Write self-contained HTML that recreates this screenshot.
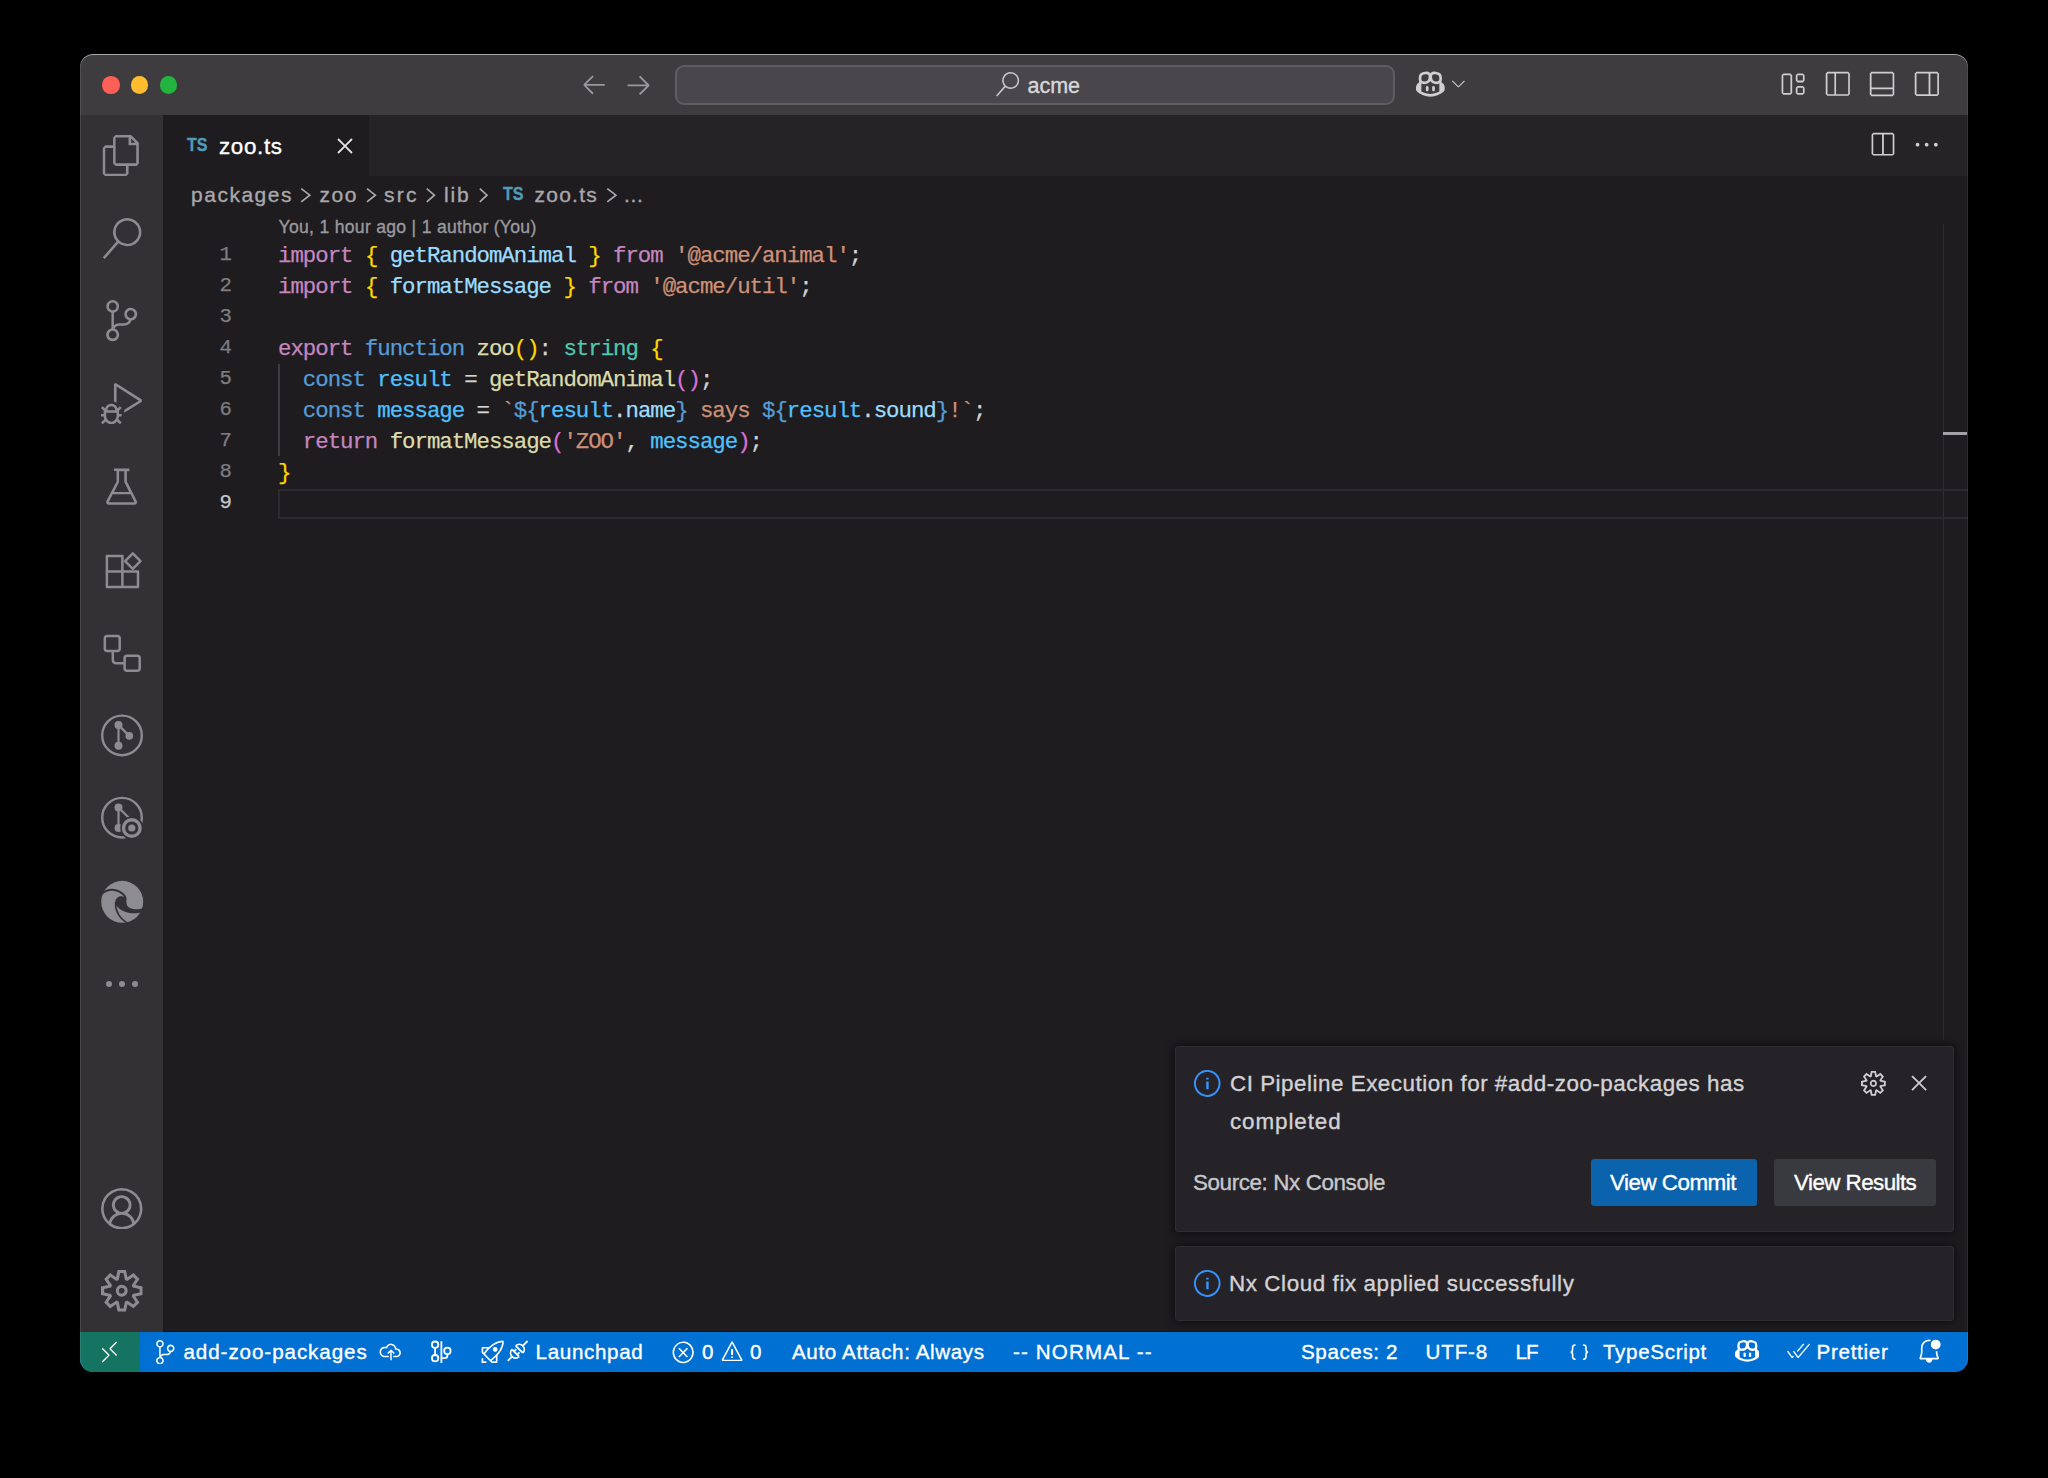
<!DOCTYPE html>
<html><head><meta charset="utf-8">
<style>
*{margin:0;padding:0;box-sizing:border-box}
html,body{width:2048px;height:1478px;background:#000;overflow:hidden}
.a{position:absolute;white-space:pre}
.S{font-family:"Liberation Sans",sans-serif;font-kerning:normal;-webkit-text-stroke:0.35px currentColor}
.M{font-family:"Liberation Mono",monospace;-webkit-text-stroke:0.25px currentColor}
#win{position:absolute;left:0;top:0;width:2048px;height:1478px;clip-path:inset(54px 80px 106px 80px round 13px)}
#frame{position:absolute;left:80px;top:54px;width:1888px;height:1318px;border-radius:13px;box-shadow:inset 0 1px 0 rgba(255,255,255,.55),inset 1px 0 0 rgba(255,255,255,.1),inset -1px 0 0 rgba(255,255,255,.08)}
</style></head><body>
<div id="win">
<div class="a" style="left:80px;top:53px;width:1888px;height:62px;background:#3e3c3f;"></div>
<div class="a" style="left:80px;top:115px;width:83px;height:1217px;background:#333134;"></div>
<div class="a" style="left:163px;top:115px;width:1805px;height:61px;background:#252326;"></div>
<div class="a" style="left:163px;top:115px;width:206px;height:61px;background:#1e1c1f;"></div>
<div class="a" style="left:163px;top:176px;width:1805px;height:1156px;background:#1e1c1f;"></div>
<div class="a" style="left:163px;top:1330.5px;width:1805px;height:1.5px;background:#161518;"></div>
<div class="a" style="left:80px;top:1332px;width:1888px;height:40px;background:#0070d3;"></div>
<div class="a" style="left:80px;top:1332px;width:60px;height:40px;background:#157461;"></div>
<div class="a" style="left:102.3px;top:76.3px;width:17.4px;height:17.4px;border-radius:50%;background:#fe5f57"></div>
<div class="a" style="left:130.8px;top:76.3px;width:17.4px;height:17.4px;border-radius:50%;background:#febc2e"></div>
<div class="a" style="left:159.6px;top:76.3px;width:17.4px;height:17.4px;border-radius:50%;background:#23b33f"></div>
<svg class="a" style="left:580.12px;top:70.47px" width="28.27" height="28.27" viewBox="0 0 16 16" preserveAspectRatio="none"><path d="M6.99 3.09 2.03 8.11V8.8L6.99 13.81L7.73 13.07L3.57 8.96H14.03V7.95H3.57L7.73 3.79Z" fill="#9a999d"/></svg>
<svg class="a" style="left:624.34px;top:69.97px" width="28.93" height="28.93" viewBox="0 0 16 16" preserveAspectRatio="none"><path d="M9.01 13.87 14.03 8.91V8.16L9.01 3.2L8.27 3.89L12.43 8.05H2.03V9.01H12.43L8.27 13.17Z" fill="#9a999d"/></svg>
<div class="a" style="left:675px;top:64.5px;width:720px;height:40.7px;border-radius:9px;border:2px solid #5f5d61;background:#49474b"></div>
<svg class="a" style="left:994.83px;top:72.40px" width="24.68" height="24.68" viewBox="0 0 16 16" preserveAspectRatio="none"><path d="M10.19 0Q8.53 0 7.17 0.88Q5.81 1.76 5.15 3.25Q4.48 4.75 4.72 6.35Q4.96 7.95 6.03 9.12L0.69 15.25L1.44 15.89L6.77 9.81Q8.21 10.93 10 10.99Q11.79 11.04 13.28 10.03Q14.77 9.01 15.36 7.31Q15.95 5.6 15.41 3.87Q14.88 2.13 13.41 1.07Q11.95 0 10.19 0ZM10.19 9.97Q8.96 9.97 7.92 9.39Q6.88 8.8 6.27 7.76Q5.65 6.72 5.65 5.49Q5.65 4.27 6.27 3.23Q6.88 2.19 7.92 1.6Q8.96 1.01 10.19 1.01Q11.41 1.01 12.43 1.6Q13.44 2.19 14.05 3.23Q14.67 4.27 14.67 5.49Q14.67 6.72 14.05 7.76Q13.44 8.8 12.43 9.41Q11.41 10.03 10.19 10.03Z" fill="#c8c7ca"/></svg>
<div id="t0" class="a S" style="left:1027.50px;top:75.82px;font-size:21.5px;line-height:21.5px;color:#d8d7da;font-weight:400;letter-spacing:0.000px;">acme</div>
<svg class="a" style="left:1416.30px;top:68.46px" width="28.70" height="28.70" viewBox="0 0 16 16" preserveAspectRatio="none"><path d="M6.24 9.97Q6.56 9.97 6.77 10.21Q6.99 10.45 6.99 10.77V12.27Q6.99 12.59 6.77 12.8Q6.56 13.01 6.24 13.01Q5.92 13.01 5.71 12.8Q5.49 12.59 5.49 12.27V10.77Q5.49 10.45 5.71 10.21Q5.92 9.97 6.24 9.97ZM10.51 10.77Q10.51 10.45 10.29 10.21Q10.08 9.97 9.76 9.97Q9.44 9.97 9.23 10.21Q9.01 10.45 9.01 10.77V12.27Q9.01 12.59 9.23 12.8Q9.44 13.01 9.76 13.01Q10.08 13.01 10.29 12.8Q10.51 12.59 10.51 12.27ZM7.84 2.77Q7.95 2.83 8 2.93L8.16 2.77Q9.07 1.76 11.09 2.03Q12.96 2.24 13.81 3.25Q14.51 4.16 14.51 5.76Q14.51 6.77 14.24 7.41L14.4 8.27H14.45Q15.2 8.64 15.6 9.31Q16 9.97 16 10.72V12Q16 12.27 15.84 12.59Q15.73 12.75 15.55 12.99Q15.36 13.23 14.99 13.49L14.4 13.92Q14.08 14.19 13.71 14.4Q13.07 14.77 12.37 15.04Q10.19 16 8 16Q5.81 16 3.63 15.04Q2.93 14.77 2.29 14.4Q1.92 14.19 1.6 13.92L1.01 13.49Q0.64 13.23 0.45 12.99Q0.27 12.75 0.16 12.59Q0 12.27 0 12V10.72Q0 9.97 0.4 9.31Q0.8 8.64 1.55 8.27H1.6L1.76 7.41Q1.49 6.77 1.49 5.76Q1.49 4.16 2.19 3.25Q3.04 2.24 4.91 2.03Q6.93 1.76 7.84 2.77ZM3.04 8.69 2.99 8.8V13.07L3.04 13.12Q3.57 13.44 4.21 13.71Q6.13 14.51 8 14.51Q9.87 14.51 11.79 13.71Q12.43 13.44 12.96 13.12L13.01 13.07V8.8L12.96 8.69Q12.32 9.01 11.25 9.01Q9.49 9.01 8.53 8Q8.21 7.68 8 7.25Q7.79 7.68 7.47 8Q6.51 9.01 4.75 9.01Q3.68 9.01 3.04 8.69ZM6.77 3.79Q6.35 3.36 5.07 3.49Q3.79 3.63 3.39 4.13Q2.99 4.64 2.99 5.71Q2.99 6.77 3.31 7.15Q3.63 7.52 4.75 7.52Q5.87 7.52 6.37 6.99Q6.88 6.45 6.99 5.39Q7.15 4.21 6.77 3.79ZM9.23 3.79Q8.85 4.21 9.01 5.39Q9.12 6.45 9.63 6.99Q10.13 7.52 11.25 7.52Q12.37 7.52 12.69 7.15Q13.01 6.77 13.01 5.71Q13.01 4.64 12.61 4.13Q12.21 3.63 10.93 3.49Q9.65 3.36 9.23 3.79Z" fill="#cfcfd2"/></svg>
<svg class="a" style="left:1448.11px;top:73.36px" width="20.86" height="20.86" viewBox="0 0 16 16" preserveAspectRatio="none"><path d="M8 10.08 12.32 5.71 12.96 6.35 8.27 10.99H7.68L2.99 6.35L3.63 5.71Z" fill="#cfcfd2"/></svg>
<svg class="a" style="left:1778.40px;top:70.30px" width="28.40" height="28.40" viewBox="0 0 16 16" preserveAspectRatio="none"><path d="M2.99 1.97 2.03 2.99V13.01L2.99 13.97H6.99L8 13.01V2.99L6.99 1.97ZM2.99 13.01V2.99H6.99V13.01ZM10.03 2.99 10.99 1.97H14.03L14.99 2.99V5.97L14.03 6.99H10.99L10.03 5.97ZM10.99 2.99V5.97H14.03V2.99ZM10.03 9.97 10.99 9.01H14.03L14.99 9.97V13.01L14.03 13.97H10.99L10.03 13.01ZM10.99 9.97V13.01H14.03V9.97Z" fill="#cfcfd2"/></svg>
<svg class="a" style="left:1823.75px;top:70.45px" width="27.60" height="27.60" viewBox="0 0 16 16" preserveAspectRatio="none"><path d="M2.03 1.01 1.01 2.03V14.03L2.03 14.99H14.03L14.99 14.03V2.03L14.03 1.01ZM2.03 14.03V2.03H6.03V14.03ZM6.99 14.03V2.03H14.03V14.03Z" fill="#cfcfd2"/></svg>
<svg class="a" style="left:1868.22px;top:70.42px" width="28.05" height="28.05" viewBox="0 0 16 16" preserveAspectRatio="none"><path d="M2.03 1.01 1.01 2.03V14.03L2.03 14.99H14.03L14.99 14.03V2.03L14.03 1.01ZM2.03 10.03V2.03H14.03V10.03ZM2.03 10.99H14.03V14.03H2.03Z" fill="#cfcfd2"/></svg>
<svg class="a" style="left:1913.45px;top:70.45px" width="27.71" height="27.71" viewBox="0 0 16 16" preserveAspectRatio="none"><path d="M2.03 1.01 1.01 2.03V14.03L2.03 14.99H14.03L14.99 14.03V2.03L14.03 1.01ZM2.03 14.03V2.03H9.01V14.03ZM10.03 14.03V2.03H14.03V14.03Z" fill="#cfcfd2"/></svg>
<svg class="a" style="left:101.4px;top:135.20px" width="41.3" height="41.3" viewBox="0 0 16 16"><path d="M11.68 0H5.65L4.69 1.01V4H1.65L0.69 5.01V15.04L1.65 16H9.71L10.67 15.04V12H13.81L14.67 11.04V2.99ZM11.68 1.39 13.28 2.99H11.68ZM9.65 14.99H1.65V5.01H4.69V11.04L5.65 12H9.65ZM13.65 10.99H5.65V1.01H10.67V4H13.65Z" fill="#8d8c90"/></svg>
<svg class="a" style="left:101.4px;top:217.80px" width="41.3" height="41.3" viewBox="0 0 16 16"><path d="M10.19 0Q8.53 0 7.17 0.88Q5.81 1.76 5.15 3.25Q4.48 4.75 4.72 6.35Q4.96 7.95 6.03 9.12L0.69 15.25L1.44 15.89L6.77 9.81Q8.21 10.93 10 10.99Q11.79 11.04 13.28 10.03Q14.77 9.01 15.36 7.31Q15.95 5.6 15.41 3.87Q14.88 2.13 13.41 1.07Q11.95 0 10.19 0ZM10.19 9.97Q8.96 9.97 7.92 9.39Q6.88 8.8 6.27 7.76Q5.65 6.72 5.65 5.49Q5.65 4.27 6.27 3.23Q6.88 2.19 7.92 1.6Q8.96 1.01 10.19 1.01Q11.41 1.01 12.43 1.6Q13.44 2.19 14.05 3.23Q14.67 4.27 14.67 5.49Q14.67 6.72 14.05 7.76Q13.44 8.8 12.43 9.41Q11.41 10.03 10.19 10.03Z" fill="#8d8c90"/></svg>
<svg class="a" style="left:101.4px;top:300.40px" width="41.3" height="41.3" viewBox="0 0 16 16"><path d="M14.03 5.49Q14.03 4.8 13.65 4.19Q13.28 3.57 12.64 3.25Q12 2.93 11.31 2.99Q10.61 3.04 10.03 3.47Q9.44 3.89 9.2 4.56Q8.96 5.23 9.07 5.92Q9.17 6.61 9.65 7.12Q10.13 7.63 10.83 7.84Q10.56 8.37 10.08 8.67Q9.6 8.96 9.01 8.96H7.04Q5.87 8.96 5.01 9.76V4.91Q5.97 4.75 6.53 3.97Q7.09 3.2 7.01 2.24Q6.93 1.28 6.21 0.64Q5.49 0 4.53 0Q3.57 0 2.85 0.64Q2.13 1.28 2.05 2.24Q1.97 3.2 2.53 3.97Q3.09 4.75 4.05 4.91V10.99Q3.09 11.2 2.51 11.95Q1.92 12.69 2 13.65Q2.08 14.61 2.75 15.28Q3.41 15.95 4.37 16Q5.33 16.05 6.08 15.47Q6.83 14.88 6.99 13.92Q7.15 12.96 6.67 12.16Q6.19 11.36 5.23 11.09Q5.49 10.56 5.97 10.27Q6.45 9.97 7.04 9.97H9.01Q9.97 9.97 10.75 9.41Q11.52 8.85 11.84 7.95Q12.75 7.84 13.39 7.12Q14.03 6.4 14.03 5.49ZM3.04 2.51Q3.04 1.87 3.47 1.44Q3.89 1.01 4.53 1.01Q5.17 1.01 5.6 1.44Q6.03 1.87 6.03 2.48Q6.03 3.09 5.6 3.55Q5.17 4 4.53 4Q3.89 4 3.47 3.55Q3.04 3.09 3.04 2.51ZM6.03 13.44Q6.03 14.08 5.6 14.51Q5.17 14.93 4.53 14.93Q3.89 14.93 3.47 14.51Q3.04 14.08 3.04 13.47Q3.04 12.85 3.47 12.4Q3.89 11.95 4.53 11.95Q5.17 11.95 5.6 12.4Q6.03 12.85 6.03 13.44ZM11.52 6.99Q10.88 6.99 10.45 6.53Q10.03 6.08 10.03 5.47Q10.03 4.85 10.45 4.43Q10.88 4 11.49 4Q12.11 4 12.56 4.43Q13.01 4.85 13.01 5.47Q13.01 6.08 12.56 6.53Q12.11 6.99 11.52 6.99Z" fill="#8d8c90"/></svg>
<svg class="a" style="left:101.4px;top:383.00px" width="41.3" height="41.3" viewBox="0 0 16 16"><path d="M7.31 9.01 6.4 9.87Q6.19 9.07 5.52 8.53Q4.85 8 4 8Q3.15 8 2.48 8.53Q1.81 9.07 1.6 9.87L0.69 9.01L0 9.71L1.17 10.83L1.01 10.99V12H0V13.01H1.01V13.07Q1.07 13.55 1.28 14.03L0 15.31L0.69 16L1.81 14.88Q2.19 15.41 2.77 15.71Q3.36 16 4 16Q4.64 16 5.23 15.71Q5.81 15.41 6.19 14.88L7.31 16L8 15.31L6.72 13.97Q6.93 13.55 6.99 13.01V12.96H8V12H6.99V10.99L6.88 10.83L8 9.71ZM4 9.01Q4.64 9.01 5.07 9.44Q5.49 9.87 5.49 10.51H2.51Q2.51 9.87 2.93 9.44Q3.36 9.01 4 9.01ZM6.03 13.01Q5.92 13.81 5.36 14.37Q4.8 14.93 4 14.99Q3.2 14.93 2.64 14.37Q2.08 13.81 2.03 13.01V11.52H6.03ZM15.84 6.4V7.25L9.01 11.57V10.4L14.67 6.83L6.03 1.33V7.63Q5.55 7.31 5.01 7.15V0.43L5.76 0Z" fill="#8d8c90"/></svg>
<svg class="a" style="left:101.4px;top:465.60px" width="41.3" height="41.3" viewBox="0 0 16 16"><path d="M13.87 13.55 10.03 6.03V2.03H10.99V1.01H5.01V1.97H6.03V5.97L2.08 13.55Q1.87 14.08 2.16 14.53Q2.45 14.99 2.99 14.99H13.01Q13.55 14.99 13.84 14.53Q14.13 14.08 13.87 13.55ZM6.88 6.4 6.99 6.19V2.03H9.01V6.24L10.93 10.03H5.07ZM2.99 14.03 4.53 10.99H11.47L13.01 14.03Z" fill="#8d8c90"/></svg>
<svg class="a" style="left:98px;top:546px" width="50" height="50" viewBox="98 546 50 50"><g fill="none" stroke="#8d8c90" stroke-width="2.5" stroke-linejoin="round"><path d="M106.9 555.9H122.4V571.5H138V587H106.9Z"/><path d="M106.9 571.5H122.4V587"/><path d="M132.8 553.4L140.5 561.1L132.8 568.8L125.1 561.1Z"/></g></svg>
<svg class="a" style="left:98px;top:628px" width="50" height="50" viewBox="98 628 50 50"><g fill="none" stroke="#8d8c90" stroke-width="2.5" stroke-linejoin="round"><rect x="104.8" y="636.1" width="14.9" height="14.9" rx="2.5"/><rect x="124.6" y="655.7" width="15.1" height="15.1" rx="2.5"/><path d="M112.8 651V659.5Q112.8 663.3 116.6 663.3H124.6"/></g></svg>
<svg class="a" style="left:98px;top:710px" width="50" height="50" viewBox="98 710 50 50"><circle cx="122" cy="735.4" r="19.8" fill="none" stroke="#8d8c90" stroke-width="2.4"/><path d="M118.5 725.1V745.7M118.5 725.1L129.3 735.9" stroke="#8d8c90" stroke-width="2.2"/><circle cx="118.5" cy="725.1" r="4" fill="#8d8c90"/><circle cx="118.5" cy="745.7" r="4" fill="#8d8c90"/><circle cx="129.3" cy="735.9" r="3.8" fill="#8d8c90"/></svg>
<svg class="a" style="left:98px;top:792px" width="52" height="52" viewBox="98 792 52 52"><circle cx="122" cy="817.7" r="19.8" fill="none" stroke="#8d8c90" stroke-width="2.4"/><path d="M118.5 807.5V828M118.5 807.5L129.3 818.3" stroke="#8d8c90" stroke-width="2.2"/><circle cx="118.5" cy="807.5" r="4" fill="#8d8c90"/><circle cx="118.5" cy="828" r="4" fill="#8d8c90"/><circle cx="131.8" cy="828" r="11.5" fill="#333134"/><circle cx="131.8" cy="828" r="8.3" fill="none" stroke="#8d8c90" stroke-width="3.4"/><circle cx="131.8" cy="828" r="3.6" fill="#8d8c90"/></svg>
<svg class="a" style="left:98px;top:876px" width="50" height="52" viewBox="98 876 50 52"><circle cx="122.2" cy="901.8" r="21" fill="#8d8c90"/><path d="M100.6 895.2C105 889.5 113 888.3 119 891.3C123.5 893.5 125.8 897 125.8 900" fill="none" stroke="#333134" stroke-width="1.9"/><path d="M115.3 901.5C115.8 897 120.5 895 124.2 896.8C126.3 898 126.5 901.5 126.5 903C126.5 907.5 132 909.5 137.5 909.3C139.5 909.2 141.5 908.8 143.3 908.2L142.3 912C138 913.5 131 914 125.5 912C119.5 909.8 115.3 906 115.3 901.5Z" fill="#333134"/><path d="M115.6 902C115 911 120 919.5 128.5 923.5" fill="none" stroke="#333134" stroke-width="1.7"/></svg>
<div class="a" style="left:105.8px;top:981.3px;width:6.2px;height:6.2px;border-radius:50%;background:#8d8c90"></div>
<div class="a" style="left:118.7px;top:981.3px;width:6.2px;height:6.2px;border-radius:50%;background:#8d8c90"></div>
<div class="a" style="left:131.7px;top:981.3px;width:6.2px;height:6.2px;border-radius:50%;background:#8d8c90"></div>
<svg class="a" style="left:101.3px;top:1187.5px" width="41.5" height="41.5" viewBox="0 0 16 16"><path d="M16 8Q16 5.81 14.93 3.97Q13.87 2.13 12.03 1.07Q10.19 0 8 0Q5.81 0 3.97 1.07Q2.13 2.13 1.07 3.97Q0 5.81 0 8Q0 9.76 0.75 11.36Q1.49 12.96 2.83 14.08L3.52 14.61Q5.55 16 8 16Q10.45 16 12.48 14.61L13.23 14.08Q14.51 12.96 15.25 11.36Q16 9.76 16 8ZM8 14.99Q5.81 14.99 4 13.71L4.05 13.33Q4.21 12.8 4.48 12.35Q4.75 11.89 5.12 11.52Q5.49 11.15 5.92 10.88Q6.35 10.61 6.91 10.48Q7.47 10.35 8 10.35Q8.8 10.35 9.57 10.64Q10.35 10.93 10.91 11.49Q11.47 12.05 11.79 12.8Q11.95 13.23 12.05 13.71Q10.24 14.99 8 14.99ZM5.55 7.57Q5.33 7.09 5.33 6.56Q5.33 6.03 5.55 5.55Q5.76 5.07 6.11 4.72Q6.45 4.37 6.93 4.13Q7.41 3.89 8 3.89Q8.59 3.89 9.04 4.11Q9.49 4.32 9.87 4.69Q10.24 5.07 10.45 5.55Q10.67 6.03 10.67 6.59Q10.67 7.15 10.45 7.6Q10.24 8.05 9.87 8.43Q9.49 8.8 9.01 9.01Q8 9.44 6.93 9.01Q6.51 8.8 6.13 8.43Q5.76 8.05 5.55 7.57ZM12.96 12.91Q12.96 12.91 12.96 12.85V12.8Q12.75 12.05 12.29 11.41Q11.84 10.77 11.2 10.29Q10.72 9.92 10.13 9.65Q10.4 9.49 10.61 9.28Q10.99 8.91 11.25 8.48Q11.79 7.63 11.73 6.56Q11.79 5.81 11.49 5.12Q11.2 4.43 10.67 3.89Q10.13 3.36 9.44 3.09Q8.75 2.83 7.97 2.83Q7.2 2.83 6.51 3.09Q5.81 3.36 5.31 3.89Q4.8 4.43 4.51 5.12Q4.21 5.81 4.21 6.56Q4.21 7.09 4.37 7.6Q4.53 8.11 4.75 8.48Q4.96 8.85 5.39 9.28Q5.6 9.49 5.87 9.71Q5.33 9.92 4.85 10.29Q4.21 10.77 3.76 11.41Q3.31 12.05 3.04 12.85V12.91Q2.08 11.95 1.55 10.67Q1.01 9.39 1.01 8Q1.01 6.08 1.95 4.48Q2.88 2.88 4.48 1.95Q6.08 1.01 8 1.01Q9.92 1.01 11.52 1.95Q13.12 2.88 14.05 4.48Q14.99 6.08 14.99 8Q14.99 9.39 14.48 10.67Q13.97 11.95 12.96 12.91Z" fill="#8d8c90"/></svg>
<svg class="a" style="left:101.3px;top:1270px" width="41.5" height="41.5" viewBox="0 0 16 16"><path d="M13.23 5.81 16 6.4V9.6L13.23 10.19L14.83 12.53L12.53 14.77L10.19 13.23L9.6 16H6.4L5.81 13.23L3.47 14.83L1.23 12.53L2.77 10.19L0 9.6V6.4L2.77 5.81L1.23 3.47L3.47 1.17L5.81 2.77L6.4 0H9.6L10.19 2.77L12.53 1.17L14.83 3.47ZM12.21 9.23 14.88 8.69V7.36L12.21 6.77L11.84 5.92L13.33 3.63L12.43 2.67L10.13 4.21L9.23 3.84L8.69 1.17H7.36L6.83 3.84L5.97 4.21L3.68 2.67L2.72 3.63L4.27 5.92L3.89 6.77L1.23 7.36V8.69L3.89 9.23L4.27 10.08L2.72 12.37L3.68 13.33L5.97 11.79L6.83 12.16L7.36 14.83H8.69L9.23 12.16L10.13 11.79L12.43 13.33L13.33 12.37L11.84 10.08ZM6.72 6.08Q7.31 5.71 8 5.71Q8.96 5.71 9.63 6.37Q10.29 7.04 10.29 8Q10.29 8.8 9.76 9.44Q9.23 10.08 8.43 10.24Q7.63 10.4 6.91 10.03Q6.19 9.65 5.89 8.88Q5.6 8.11 5.81 7.33Q6.03 6.56 6.72 6.08ZM7.36 8.96Q7.68 9.12 8 9.12Q8.48 9.12 8.8 8.8Q9.12 8.48 9.12 8.03Q9.12 7.57 8.88 7.28Q8.64 6.99 8.24 6.91Q7.84 6.83 7.47 7.01Q7.09 7.2 6.93 7.57Q6.77 7.95 6.91 8.35Q7.04 8.75 7.36 8.96Z" fill="#8d8c90"/></svg>
<div id="t1" class="a S" style="left:186.90px;top:135.72px;font-size:18.4px;line-height:18.4px;color:#519aba;font-weight:700;transform:scaleX(0.875);transform-origin:0 0;">TS</div>
<div id="t2" class="a S" style="left:219.00px;top:135.71px;font-size:22.4px;line-height:22.4px;color:#ffffff;font-weight:400;letter-spacing:0.640px;">zoo.ts</div>
<svg class="a" style="left:330.66px;top:131.66px" width="27.99" height="27.99" viewBox="0 0 16 16" preserveAspectRatio="none"><path d="M8 8.69 11.63 12.37 12.37 11.63 8.69 8 12.37 4.37 11.63 3.63 8 7.31 4.37 3.63 3.63 4.37 7.31 8 3.63 11.63 4.37 12.37Z" fill="#e6e6e6"/></svg>
<svg class="a" style="left:1868.43px;top:131.22px" width="28.15" height="28.15" viewBox="0 0 16 16" preserveAspectRatio="none"><path d="M14.03 1.01H2.99L2.03 1.97V13.01L2.99 13.97H14.03L14.99 13.01V1.97ZM8 13.01H2.99V1.97H8ZM14.03 13.01H9.01V1.97H14.03Z" fill="#cfcfd2"/></svg>
<svg class="a" style="left:1912.08px;top:130.39px" width="29.33" height="29.33" viewBox="0 0 16 16" preserveAspectRatio="none"><path d="M4 8Q4 8.43 3.71 8.72Q3.41 9.01 2.99 9.01Q2.56 9.01 2.29 8.72Q2.03 8.43 2.03 8Q2.03 7.57 2.29 7.28Q2.56 6.99 2.99 6.99Q3.41 6.99 3.71 7.28Q4 7.57 4 8ZM9.01 8Q9.01 8.43 8.72 8.72Q8.43 9.01 8 9.01Q7.57 9.01 7.28 8.72Q6.99 8.43 6.99 8Q6.99 7.57 7.28 7.28Q7.57 6.99 8 6.99Q8.43 6.99 8.72 7.28Q9.01 7.57 9.01 8ZM14.03 8Q14.03 8.43 13.73 8.72Q13.44 9.01 13.01 9.01Q12.59 9.01 12.29 8.72Q12 8.43 12 8Q12 7.57 12.29 7.28Q12.59 6.99 13.01 6.99Q13.44 6.99 13.73 7.28Q14.03 7.57 14.03 8Z" fill="#cfcfd2"/></svg>
<div id="t3" class="a S" style="left:191.00px;top:184.00px;font-size:21px;line-height:21px;color:#a9a8ac;font-weight:400;letter-spacing:1.514px;">packages</div>
<div id="t4" class="a S" style="left:319.50px;top:184.00px;font-size:21px;line-height:21px;color:#a9a8ac;font-weight:400;letter-spacing:1.500px;">zoo</div>
<div id="t5" class="a S" style="left:384.00px;top:184.00px;font-size:21px;line-height:21px;color:#a9a8ac;font-weight:400;letter-spacing:2.200px;">src</div>
<div id="t6" class="a S" style="left:444.00px;top:184.00px;font-size:21px;line-height:21px;color:#a9a8ac;font-weight:400;letter-spacing:1.800px;">lib</div>
<div id="t7" class="a S" style="left:503.10px;top:184.71px;font-size:18.3px;line-height:18.3px;color:#519aba;font-weight:700;transform:scaleX(0.88);transform-origin:0 0;">TS</div>
<div id="t8" class="a S" style="left:534.50px;top:184.00px;font-size:21px;line-height:21px;color:#a9a8ac;font-weight:400;letter-spacing:1.240px;">zoo.ts</div>
<div id="t9" class="a S" style="left:624.00px;top:184.00px;font-size:21px;line-height:21px;color:#a9a8ac;font-weight:400;letter-spacing:0.700px;">...</div>
<svg class="a" style="left:0;top:0" width="700" height="220"><path d="M301.2 188.6L309.8 195.2L301.2 201.8" fill="none" stroke="#a9a8ac" stroke-width="1.7"/></svg>
<svg class="a" style="left:0;top:0" width="700" height="220"><path d="M367.0 188.6L375.3 195.2L367.0 201.8" fill="none" stroke="#a9a8ac" stroke-width="1.7"/></svg>
<svg class="a" style="left:0;top:0" width="700" height="220"><path d="M426.8 188.6L434.4 195.2L426.8 201.8" fill="none" stroke="#a9a8ac" stroke-width="1.7"/></svg>
<svg class="a" style="left:0;top:0" width="700" height="220"><path d="M479.8 188.6L487.0 195.2L479.8 201.8" fill="none" stroke="#a9a8ac" stroke-width="1.7"/></svg>
<svg class="a" style="left:0;top:0" width="700" height="220"><path d="M607.3 188.6L615.9 195.2L607.3 201.8" fill="none" stroke="#a9a8ac" stroke-width="1.7"/></svg>
<div id="t10" class="a S" style="left:278.50px;top:218.71px;font-size:17.6px;line-height:17.6px;color:#9a999d;font-weight:400;letter-spacing:0.290px;">You, 1 hour ago | 1 author (You)</div>
<div class="a" style="left:278px;top:488.5px;width:1690px;height:30px;border:2px solid #2b2a2e;border-right:none"></div>
<div class="a" style="left:278px;top:364px;width:2px;height:92px;background:#3d3c40;"></div>
<div class="a M" style="left:219.00px;top:245.46px;font-size:20.67px;line-height:20.67px;color:#7e7d82;width:13px;text-align:right">1</div>
<div class="a M" style="left:278.00px;top:245.43px;font-size:22.4px;line-height:22.4px;letter-spacing:-1.030px"><span style="color:#c586c0">import</span><span style="color:#d4d4d4"> </span><span style="color:#ffd700">{</span><span style="color:#9cdcfe"> getRandomAnimal </span><span style="color:#ffd700">}</span><span style="color:#c586c0"> from </span><span style="color:#ce9178">'@acme/animal'</span><span style="color:#d4d4d4">;</span></div>
<div class="a M" style="left:219.00px;top:276.46px;font-size:20.67px;line-height:20.67px;color:#7e7d82;width:13px;text-align:right">2</div>
<div class="a M" style="left:278.00px;top:276.43px;font-size:22.4px;line-height:22.4px;letter-spacing:-1.030px"><span style="color:#c586c0">import</span><span style="color:#d4d4d4"> </span><span style="color:#ffd700">{</span><span style="color:#9cdcfe"> formatMessage </span><span style="color:#ffd700">}</span><span style="color:#c586c0"> from </span><span style="color:#ce9178">'@acme/util'</span><span style="color:#d4d4d4">;</span></div>
<div class="a M" style="left:219.00px;top:307.46px;font-size:20.67px;line-height:20.67px;color:#7e7d82;width:13px;text-align:right">3</div>
<div class="a M" style="left:219.00px;top:338.46px;font-size:20.67px;line-height:20.67px;color:#7e7d82;width:13px;text-align:right">4</div>
<div class="a M" style="left:278.00px;top:338.43px;font-size:22.4px;line-height:22.4px;letter-spacing:-1.030px"><span style="color:#c586c0">export</span><span style="color:#569cd6"> function</span><span style="color:#dcdcaa"> zoo</span><span style="color:#ffd700">()</span><span style="color:#d4d4d4">:</span><span style="color:#4ec9b0"> string</span><span style="color:#ffd700"> {</span></div>
<div class="a M" style="left:219.00px;top:369.46px;font-size:20.67px;line-height:20.67px;color:#7e7d82;width:13px;text-align:right">5</div>
<div class="a M" style="left:278.00px;top:369.43px;font-size:22.4px;line-height:22.4px;letter-spacing:-1.030px"><span style="color:#569cd6">  const</span><span style="color:#4fc1ff"> result</span><span style="color:#d4d4d4"> = </span><span style="color:#dcdcaa">getRandomAnimal</span><span style="color:#da70d6">()</span><span style="color:#d4d4d4">;</span></div>
<div class="a M" style="left:219.00px;top:400.46px;font-size:20.67px;line-height:20.67px;color:#7e7d82;width:13px;text-align:right">6</div>
<div class="a M" style="left:278.00px;top:400.43px;font-size:22.4px;line-height:22.4px;letter-spacing:-1.030px"><span style="color:#569cd6">  const</span><span style="color:#4fc1ff"> message</span><span style="color:#d4d4d4"> = </span><span style="color:#ce9178">`</span><span style="color:#569cd6">${</span><span style="color:#4fc1ff">result</span><span style="color:#d4d4d4">.</span><span style="color:#9cdcfe">name</span><span style="color:#569cd6">}</span><span style="color:#ce9178"> says </span><span style="color:#569cd6">${</span><span style="color:#4fc1ff">result</span><span style="color:#d4d4d4">.</span><span style="color:#9cdcfe">sound</span><span style="color:#569cd6">}</span><span style="color:#ce9178">!`</span><span style="color:#d4d4d4">;</span></div>
<div class="a M" style="left:219.00px;top:431.46px;font-size:20.67px;line-height:20.67px;color:#7e7d82;width:13px;text-align:right">7</div>
<div class="a M" style="left:278.00px;top:431.43px;font-size:22.4px;line-height:22.4px;letter-spacing:-1.030px"><span style="color:#c586c0">  return</span><span style="color:#dcdcaa"> formatMessage</span><span style="color:#da70d6">(</span><span style="color:#ce9178">'ZOO'</span><span style="color:#d4d4d4">,</span><span style="color:#4fc1ff"> message</span><span style="color:#da70d6">)</span><span style="color:#d4d4d4">;</span></div>
<div class="a M" style="left:219.00px;top:462.46px;font-size:20.67px;line-height:20.67px;color:#7e7d82;width:13px;text-align:right">8</div>
<div class="a M" style="left:278.00px;top:462.43px;font-size:22.4px;line-height:22.4px;letter-spacing:-1.030px"><span style="color:#ffd700">}</span></div>
<div class="a M" style="left:219.00px;top:493.46px;font-size:20.67px;line-height:20.67px;color:#c8c7cb;width:13px;text-align:right">9</div>
<div class="a" style="left:1943px;top:224px;width:1px;height:816px;background:#2c2b2f;"></div>
<div class="a" style="left:1943px;top:432px;width:24px;height:3px;background:#a3a2a6;"></div>
<div class="a" style="left:1175px;top:1046px;width:779px;height:186px;background:#252327;border-radius:3px;border:1px solid #2f2d31;box-shadow:0 0 8px 1px rgba(0,0,0,.6)"></div>
<div class="a" style="left:1175px;top:1246px;width:779px;height:75px;background:#252327;border-radius:3px;border:1px solid #2f2d31;box-shadow:0 0 8px 1px rgba(0,0,0,.6)"></div>
<svg class="a" style="left:1191.86px;top:1068.10px" width="30.87" height="30.87" viewBox="0 0 16 16" preserveAspectRatio="none"><path d="M8.59 1.01Q9.76 1.17 10.85 1.68Q11.95 2.19 12.75 3.04Q14.03 4.32 14.51 5.97Q14.99 7.63 14.67 9.33Q14.35 11.04 13.23 12.43Q12.21 13.71 10.75 14.37Q9.28 15.04 7.68 14.99Q6.08 14.93 4.64 14.19Q3.57 13.6 2.77 12.69Q1.97 11.79 1.52 10.67Q1.07 9.55 1.01 8.35Q0.96 7.15 1.31 5.97Q1.65 4.8 2.35 3.84Q3.04 2.88 4.05 2.19Q5.07 1.49 6.21 1.2Q7.36 0.91 8.59 1.01ZM9.07 13.87Q10.03 13.65 10.91 13.12Q11.79 12.59 12.43 11.79Q13.39 10.61 13.68 9.15Q13.97 7.68 13.55 6.27Q13.12 4.85 12.05 3.73Q11.09 2.77 9.79 2.32Q8.48 1.87 7.12 2.05Q5.76 2.24 4.64 2.99Q3.31 3.89 2.61 5.31Q1.92 6.72 2 8.29Q2.08 9.87 2.91 11.2Q3.73 12.53 5.12 13.28Q6.03 13.76 7.04 13.92Q8.05 14.08 9.01 13.87ZM7.36 5.97H8.64V5.01H7.36ZM8.64 6.99V10.99H7.36V6.99Z" fill="#3794ff"/></svg>
<div id="t11" class="a S" style="left:1230.00px;top:1073.21px;font-size:22.4px;line-height:22.4px;color:#d3d2d6;font-weight:400;letter-spacing:0.517px;">CI Pipeline Execution for #add-zoo-packages has</div>
<div id="t12" class="a S" style="left:1230.00px;top:1110.80px;font-size:22.4px;line-height:22.4px;color:#d3d2d6;font-weight:400;letter-spacing:0.925px;">completed</div>
<svg class="a" style="left:1860.90px;top:1071.00px" width="24.80" height="24.80" viewBox="0 0 16 16" preserveAspectRatio="none"><path d="M13.23 5.81 16 6.4V9.6L13.23 10.19L14.83 12.53L12.53 14.77L10.19 13.23L9.6 16H6.4L5.81 13.23L3.47 14.83L1.23 12.53L2.77 10.19L0 9.6V6.4L2.77 5.81L1.23 3.47L3.47 1.17L5.81 2.77L6.4 0H9.6L10.19 2.77L12.53 1.17L14.83 3.47ZM12.21 9.23 14.88 8.69V7.36L12.21 6.77L11.84 5.92L13.33 3.63L12.43 2.67L10.13 4.21L9.23 3.84L8.69 1.17H7.36L6.83 3.84L5.97 4.21L3.68 2.67L2.72 3.63L4.27 5.92L3.89 6.77L1.23 7.36V8.69L3.89 9.23L4.27 10.08L2.72 12.37L3.68 13.33L5.97 11.79L6.83 12.16L7.36 14.83H8.69L9.23 12.16L10.13 11.79L12.43 13.33L13.33 12.37L11.84 10.08ZM6.72 6.08Q7.31 5.71 8 5.71Q8.96 5.71 9.63 6.37Q10.29 7.04 10.29 8Q10.29 8.8 9.76 9.44Q9.23 10.08 8.43 10.24Q7.63 10.4 6.91 10.03Q6.19 9.65 5.89 8.88Q5.6 8.11 5.81 7.33Q6.03 6.56 6.72 6.08ZM7.36 8.96Q7.68 9.12 8 9.12Q8.48 9.12 8.8 8.8Q9.12 8.48 9.12 8.03Q9.12 7.57 8.88 7.28Q8.64 6.99 8.24 6.91Q7.84 6.83 7.47 7.01Q7.09 7.2 6.93 7.57Q6.77 7.95 6.91 8.35Q7.04 8.75 7.36 8.96Z" fill="#cfcfd2"/></svg>
<svg class="a" style="left:1904.61px;top:1069.31px" width="28.17" height="28.17" viewBox="0 0 16 16" preserveAspectRatio="none"><path d="M8 8.69 11.63 12.37 12.37 11.63 8.69 8 12.37 4.37 11.63 3.63 8 7.31 4.37 3.63 3.63 4.37 7.31 8 3.63 11.63 4.37 12.37Z" fill="#cfcfd2"/></svg>
<div id="t13" class="a S" style="left:1193.00px;top:1171.91px;font-size:22.4px;line-height:22.4px;color:#c9c8cc;font-weight:400;letter-spacing:-0.388px;">Source: Nx Console</div>
<div class="a" style="left:1591px;top:1158.6px;width:165.5px;height:47.4px;background:#0b62ad;border-radius:3px"></div>
<div id="t14" class="a S" style="left:1610.00px;top:1172.10px;font-size:22.4px;line-height:22.4px;color:#ffffff;font-weight:400;letter-spacing:-0.500px;">View Commit</div>
<div class="a" style="left:1774px;top:1158.6px;width:162px;height:47.4px;background:#393a3f;border-radius:3px"></div>
<div id="t15" class="a S" style="left:1794.00px;top:1172.10px;font-size:22.4px;line-height:22.4px;color:#ffffff;font-weight:400;letter-spacing:-0.564px;">View Results</div>
<svg class="a" style="left:1191.86px;top:1268.10px" width="30.87" height="30.87" viewBox="0 0 16 16" preserveAspectRatio="none"><path d="M8.59 1.01Q9.76 1.17 10.85 1.68Q11.95 2.19 12.75 3.04Q14.03 4.32 14.51 5.97Q14.99 7.63 14.67 9.33Q14.35 11.04 13.23 12.43Q12.21 13.71 10.75 14.37Q9.28 15.04 7.68 14.99Q6.08 14.93 4.64 14.19Q3.57 13.6 2.77 12.69Q1.97 11.79 1.52 10.67Q1.07 9.55 1.01 8.35Q0.96 7.15 1.31 5.97Q1.65 4.8 2.35 3.84Q3.04 2.88 4.05 2.19Q5.07 1.49 6.21 1.2Q7.36 0.91 8.59 1.01ZM9.07 13.87Q10.03 13.65 10.91 13.12Q11.79 12.59 12.43 11.79Q13.39 10.61 13.68 9.15Q13.97 7.68 13.55 6.27Q13.12 4.85 12.05 3.73Q11.09 2.77 9.79 2.32Q8.48 1.87 7.12 2.05Q5.76 2.24 4.64 2.99Q3.31 3.89 2.61 5.31Q1.92 6.72 2 8.29Q2.08 9.87 2.91 11.2Q3.73 12.53 5.12 13.28Q6.03 13.76 7.04 13.92Q8.05 14.08 9.01 13.87ZM7.36 5.97H8.64V5.01H7.36ZM8.64 6.99V10.99H7.36V6.99Z" fill="#3794ff"/></svg>
<div id="t16" class="a S" style="left:1229.00px;top:1273.01px;font-size:22.4px;line-height:22.4px;color:#d3d2d6;font-weight:400;letter-spacing:0.587px;">Nx Cloud fix applied successfully</div>
<svg class="a" style="left:97.33px;top:1340.42px" width="25.00" height="25.00" viewBox="0 0 16 16" preserveAspectRatio="none"><path d="M12.91 9.55 8.91 5.6 12.91 1.6 12.27 1.01 8 5.28V5.92L12.27 10.19ZM2.99 5.6 7.09 9.71 2.99 13.76 3.63 14.4 8 9.97V9.39L3.63 5.01Z" fill="#ffffff"/></svg>
<svg class="a" style="left:152.64px;top:1339.60px" width="24.59" height="24.59" viewBox="0 0 16 16" preserveAspectRatio="none"><path d="M14.03 5.49Q14.03 4.8 13.65 4.19Q13.28 3.57 12.64 3.25Q12 2.93 11.31 2.99Q10.61 3.04 10.03 3.47Q9.44 3.89 9.2 4.56Q8.96 5.23 9.07 5.92Q9.17 6.61 9.65 7.12Q10.13 7.63 10.83 7.84Q10.56 8.37 10.08 8.67Q9.6 8.96 9.01 8.96H7.04Q5.87 8.96 5.01 9.76V4.91Q5.97 4.75 6.53 3.97Q7.09 3.2 7.01 2.24Q6.93 1.28 6.21 0.64Q5.49 0 4.53 0Q3.57 0 2.85 0.64Q2.13 1.28 2.05 2.24Q1.97 3.2 2.53 3.97Q3.09 4.75 4.05 4.91V10.99Q3.09 11.2 2.51 11.95Q1.92 12.69 2 13.65Q2.08 14.61 2.75 15.28Q3.41 15.95 4.37 16Q5.33 16.05 6.08 15.47Q6.83 14.88 6.99 13.92Q7.15 12.96 6.67 12.16Q6.19 11.36 5.23 11.09Q5.49 10.56 5.97 10.27Q6.45 9.97 7.04 9.97H9.01Q9.97 9.97 10.75 9.41Q11.52 8.85 11.84 7.95Q12.75 7.84 13.39 7.12Q14.03 6.4 14.03 5.49ZM3.04 2.51Q3.04 1.87 3.47 1.44Q3.89 1.01 4.53 1.01Q5.17 1.01 5.6 1.44Q6.03 1.87 6.03 2.48Q6.03 3.09 5.6 3.55Q5.17 4 4.53 4Q3.89 4 3.47 3.55Q3.04 3.09 3.04 2.51ZM6.03 13.44Q6.03 14.08 5.6 14.51Q5.17 14.93 4.53 14.93Q3.89 14.93 3.47 14.51Q3.04 14.08 3.04 13.47Q3.04 12.85 3.47 12.4Q3.89 11.95 4.53 11.95Q5.17 11.95 5.6 12.4Q6.03 12.85 6.03 13.44ZM11.52 6.99Q10.88 6.99 10.45 6.53Q10.03 6.08 10.03 5.47Q10.03 4.85 10.45 4.43Q10.88 4 11.49 4Q12.11 4 12.56 4.43Q13.01 4.85 13.01 5.47Q13.01 6.08 12.56 6.53Q12.11 6.99 11.52 6.99Z" fill="#ffffff"/></svg>
<div id="t17" class="a S" style="left:183.50px;top:1342.11px;font-size:20.6px;line-height:20.6px;color:#ffffff;font-weight:400;letter-spacing:0.920px;">add-zoo-packages</div>
<svg class="a" style="left:377.98px;top:1339.10px" width="24.48" height="24.48" viewBox="0 0 16 16" preserveAspectRatio="none"><path d="M11.95 5.97H12Q13.23 6.03 14.11 6.88Q14.99 7.73 14.99 8.99Q14.99 10.24 14.11 11.12Q13.23 12 12 12H10.03V10.99H12Q12.8 10.99 13.36 10.4Q13.92 9.81 13.92 9.01Q13.92 8.21 13.36 7.63Q12.8 7.04 12 6.99H11.09L10.99 6.13Q10.88 5.33 10.27 4.75Q9.65 4.16 8.83 4.03Q8 3.89 7.28 4.32Q6.56 4.75 6.24 5.49L5.92 6.24L5.07 6.08Q4.8 6.03 4.53 5.97Q3.47 6.03 2.77 6.72Q2.24 7.25 2.08 8Q1.92 8.75 2.21 9.44Q2.51 10.13 3.15 10.56Q3.79 10.99 4.53 10.99H7.04V12H4.53Q3.79 12 3.09 11.71Q2.4 11.41 1.92 10.83Q1.12 9.97 1.01 8.83Q0.91 7.68 1.49 6.72Q1.87 6.08 2.48 5.63Q3.09 5.17 3.84 5.04Q4.59 4.91 5.33 5.12Q5.81 4.05 6.83 3.47Q7.84 2.88 8.99 3.04Q10.13 3.2 10.96 4.03Q11.79 4.85 11.95 6.03ZM10.29 9.87 8.96 8.53V13.97H8V8.59L6.72 9.87L6.03 9.12L8.16 6.99H8.85L10.99 9.12Z" fill="#ffffff"/></svg>
<svg class="a" style="left:425px;top:1336px" width="30" height="32" viewBox="425 1336 30 32"><g fill="none" stroke="#ffffff" stroke-width="1.8"><circle cx="435.1" cy="1344.7" r="3.2"/><circle cx="435.1" cy="1358.2" r="3.2"/><circle cx="447.4" cy="1350.9" r="3.2"/><path d="M435.1 1347.9V1355M441.4 1341.2V1362.9M447.4 1354.1V1355.5Q447.4 1358.2 444.7 1358.2H441.4"/></g></svg>
<svg class="a" style="left:480.38px;top:1339.38px" width="25.53" height="25.53" viewBox="0 0 16 16" preserveAspectRatio="none"><path d="M14.51 1.01Q12 1.01 9.55 2.24Q7.57 3.25 5.65 5.01H1.49L1.01 5.49V8.48L1.17 8.85L7.15 14.88L7.52 14.99H10.51L10.99 14.51V10.35Q12.75 8.43 13.76 6.45Q14.99 4 14.99 1.49ZM2.03 5.97H4.64Q3.41 7.25 2.4 8.69L2.03 8.32ZM7.68 13.97 7.31 13.6Q8.75 12.59 9.97 11.36V13.97ZM6.56 12.85 3.15 9.44Q4 8.16 5.12 6.93Q6.99 5.01 8.91 3.79Q11.47 2.19 13.97 2.03Q13.81 4.53 12.21 7.09Q10.99 9.01 9.07 10.88Q7.84 12 6.56 12.85ZM4 14.99V13.97H2.03V12H1.01V14.99ZM10.77 7.31Q11.09 6.83 10.96 6.21Q10.83 5.6 10.32 5.25Q9.81 4.91 9.2 5.04Q8.59 5.17 8.24 5.68Q7.89 6.19 8.03 6.8Q8.16 7.41 8.67 7.76Q9.17 8.11 9.79 7.97Q10.4 7.84 10.77 7.31Z" fill="#ffffff"/></svg>
<svg class="a" style="left:500px;top:1334px" width="36" height="34" viewBox="500 1334 36 34"><g transform="translate(517.7 1350.9) rotate(-45)" fill="none" stroke="#ffffff" stroke-width="1.8"><path d="M-14 0H-8.5M-3 -5V5M-3 -5A5 5 0 0 0 -3 5M-3 -2.3H0.3M-3 2.3H0.3M2.2 -5V5M2.2 -5A5 5 0 0 1 2.2 5M7.2 0H14"/></g></svg>
<div id="t18" class="a S" style="left:535.50px;top:1342.11px;font-size:20.6px;line-height:20.6px;color:#ffffff;font-weight:400;letter-spacing:0.675px;">Launchpad</div>
<svg class="a" style="left:670.80px;top:1339.68px" width="24.71" height="24.71" viewBox="0 0 16 16" preserveAspectRatio="none"><path d="M8.59 1.01Q9.76 1.07 10.85 1.6Q11.95 2.13 12.8 2.99Q14.83 5.17 14.83 8.11Q14.83 10.4 13.23 12.48Q12.43 13.44 11.41 14.05Q10.4 14.67 9.23 14.88Q6.67 15.36 4.59 14.19Q3.52 13.6 2.72 12.69Q1.92 11.79 1.49 10.67Q1.07 9.55 0.99 8.32Q0.91 7.09 1.28 5.97Q2.08 3.52 4.11 2.19Q5.07 1.55 6.21 1.23Q7.36 0.91 8.59 1.01ZM9.12 13.92Q11.15 13.44 12.48 11.79Q13.81 9.97 13.71 8Q13.71 6.77 13.25 5.65Q12.8 4.53 12 3.68Q10.45 2.13 8.43 1.97Q7.41 1.92 6.4 2.16Q5.39 2.4 4.59 2.99Q2.88 4.27 2.27 6.35Q1.65 8.43 2.53 10.35Q3.41 12.27 5.23 13.28Q6.08 13.81 7.09 13.97Q8.11 14.13 9.12 13.92ZM7.89 7.52 10.29 5.01 10.99 5.71 8.59 8.21 10.99 10.72 10.29 11.41 7.89 8.91 5.49 11.41 4.8 10.72 7.2 8.21 4.8 5.71 5.49 5.01Z" fill="#ffffff"/></svg>
<div id="t19" class="a S" style="left:702.00px;top:1342.11px;font-size:20.6px;line-height:20.6px;color:#ffffff;font-weight:400;letter-spacing:-1.600px;">0</div>
<svg class="a" style="left:719.97px;top:1339.97px" width="24.16" height="24.16" viewBox="0 0 16 16" preserveAspectRatio="none"><path d="M7.57 1.01H8.43L14.99 13.28L14.56 13.97H1.44L1.01 13.28ZM8 2.29 2.29 13.01H13.71ZM8.64 12V10.99H7.36V12ZM7.36 9.97V5.97H8.64V9.97Z" fill="#ffffff"/></svg>
<div id="t20" class="a S" style="left:750.00px;top:1342.11px;font-size:20.6px;line-height:20.6px;color:#ffffff;font-weight:400;letter-spacing:5.200px;">0</div>
<div id="t21" class="a S" style="left:792.00px;top:1342.11px;font-size:20.6px;line-height:20.6px;color:#ffffff;font-weight:400;letter-spacing:0.622px;">Auto Attach: Always</div>
<div id="t22" class="a S" style="left:1013.00px;top:1342.11px;font-size:20.6px;line-height:20.6px;color:#ffffff;font-weight:400;letter-spacing:1.127px;">-- NORMAL --</div>
<div id="t23" class="a S" style="left:1301.00px;top:1342.11px;font-size:20.6px;line-height:20.6px;color:#ffffff;font-weight:400;letter-spacing:0.600px;">Spaces: 2</div>
<div id="t24" class="a S" style="left:1425.50px;top:1342.11px;font-size:20.6px;line-height:20.6px;color:#ffffff;font-weight:400;letter-spacing:0.850px;">UTF-8</div>
<div id="t25" class="a S" style="left:1515.50px;top:1342.11px;font-size:20.6px;line-height:20.6px;color:#ffffff;font-weight:400;letter-spacing:-1.000px;">LF</div>
<svg class="a" style="left:1565px;top:1338px" width="30" height="28" viewBox="1565 1338 30 28"><g fill="none" stroke="#ffffff" stroke-width="1.6" stroke-linecap="round"><path d="M1575 1345Q1572.6 1345 1572.6 1347.6V1349.6Q1572.6 1352.1 1570.6 1352.1Q1572.6 1352.1 1572.6 1354.6V1356.6Q1572.6 1359.2 1575 1359.2"/><path d="M1583.6 1345Q1586 1345 1586 1347.6V1349.6Q1586 1352.1 1588 1352.1Q1586 1352.1 1586 1354.6V1356.6Q1586 1359.2 1583.6 1359.2"/></g></svg>
<div id="t26" class="a S" style="left:1603.00px;top:1342.11px;font-size:20.6px;line-height:20.6px;color:#ffffff;font-weight:400;letter-spacing:0.667px;">TypeScript</div>
<svg class="a" style="left:1734.50px;top:1337.46px" width="24.70" height="24.70" viewBox="0 0 16 16" preserveAspectRatio="none"><path d="M6.24 9.97Q6.56 9.97 6.77 10.21Q6.99 10.45 6.99 10.77V12.27Q6.99 12.59 6.77 12.8Q6.56 13.01 6.24 13.01Q5.92 13.01 5.71 12.8Q5.49 12.59 5.49 12.27V10.77Q5.49 10.45 5.71 10.21Q5.92 9.97 6.24 9.97ZM10.51 10.77Q10.51 10.45 10.29 10.21Q10.08 9.97 9.76 9.97Q9.44 9.97 9.23 10.21Q9.01 10.45 9.01 10.77V12.27Q9.01 12.59 9.23 12.8Q9.44 13.01 9.76 13.01Q10.08 13.01 10.29 12.8Q10.51 12.59 10.51 12.27ZM7.84 2.77Q7.95 2.83 8 2.93L8.16 2.77Q9.07 1.76 11.09 2.03Q12.96 2.24 13.81 3.25Q14.51 4.16 14.51 5.76Q14.51 6.77 14.24 7.41L14.4 8.27H14.45Q15.2 8.64 15.6 9.31Q16 9.97 16 10.72V12Q16 12.27 15.84 12.59Q15.73 12.75 15.55 12.99Q15.36 13.23 14.99 13.49L14.4 13.92Q14.08 14.19 13.71 14.4Q13.07 14.77 12.37 15.04Q10.19 16 8 16Q5.81 16 3.63 15.04Q2.93 14.77 2.29 14.4Q1.92 14.19 1.6 13.92L1.01 13.49Q0.64 13.23 0.45 12.99Q0.27 12.75 0.16 12.59Q0 12.27 0 12V10.72Q0 9.97 0.4 9.31Q0.8 8.64 1.55 8.27H1.6L1.76 7.41Q1.49 6.77 1.49 5.76Q1.49 4.16 2.19 3.25Q3.04 2.24 4.91 2.03Q6.93 1.76 7.84 2.77ZM3.04 8.69 2.99 8.8V13.07L3.04 13.12Q3.57 13.44 4.21 13.71Q6.13 14.51 8 14.51Q9.87 14.51 11.79 13.71Q12.43 13.44 12.96 13.12L13.01 13.07V8.8L12.96 8.69Q12.32 9.01 11.25 9.01Q9.49 9.01 8.53 8Q8.21 7.68 8 7.25Q7.79 7.68 7.47 8Q6.51 9.01 4.75 9.01Q3.68 9.01 3.04 8.69ZM6.77 3.79Q6.35 3.36 5.07 3.49Q3.79 3.63 3.39 4.13Q2.99 4.64 2.99 5.71Q2.99 6.77 3.31 7.15Q3.63 7.52 4.75 7.52Q5.87 7.52 6.37 6.99Q6.88 6.45 6.99 5.39Q7.15 4.21 6.77 3.79ZM9.23 3.79Q8.85 4.21 9.01 5.39Q9.12 6.45 9.63 6.99Q10.13 7.52 11.25 7.52Q12.37 7.52 12.69 7.15Q13.01 6.77 13.01 5.71Q13.01 4.64 12.61 4.13Q12.21 3.63 10.93 3.49Q9.65 3.36 9.23 3.79Z" fill="#ffffff"/></svg>
<svg class="a" style="left:1786.50px;top:1338.57px" width="23.75" height="23.75" viewBox="0 0 16 16" preserveAspectRatio="none"><path d="M15.63 3.57 7.84 12.8H7.09L4 8.37L4.75 7.84L7.52 11.73L14.93 2.99ZM7.25 8.8 11.63 3.57 10.93 2.99 6.67 8ZM5.71 9.17 6.24 9.97ZM4.05 11.09 4.64 11.89 3.84 12.8H3.09L0 8.37L0.75 7.84L3.52 11.73Z" fill="#ffffff"/></svg>
<div id="t27" class="a S" style="left:1816.50px;top:1342.11px;font-size:20.6px;line-height:20.6px;color:#ffffff;font-weight:400;letter-spacing:0.714px;">Prettier</div>
<svg class="a" style="left:1915.67px;top:1338.38px" width="26.30" height="26.30" viewBox="0 0 16 16" preserveAspectRatio="none"><path d="M13.01 7.89Q12.53 8 12 8V8.21Q12 9.6 12.43 10.93L12.8 12H3.15L3.52 10.88Q4 9.55 4 8.21V6.03Q4 5.17 4.35 4.37Q4.69 3.57 5.31 3.01Q5.92 2.45 6.75 2.19Q7.57 1.92 8.37 2.03H8.53Q8.8 1.55 9.17 1.17Q8.85 1.07 8.48 1.01Q7.41 0.91 6.4 1.25Q5.39 1.6 4.61 2.32Q3.84 3.04 3.41 4Q2.99 4.96 2.99 6.03V8.21Q2.99 9.39 2.61 10.56L2.03 12.32L2.45 13.01H5.97Q5.97 13.81 6.56 14.4Q7.15 14.99 7.97 14.99Q8.8 14.99 9.39 14.4Q9.97 13.81 9.97 13.01H13.49L13.97 12.32L13.39 10.56Q13.01 9.39 13.01 8.21ZM8 14.03Q8.37 14.03 8.69 13.73Q9.01 13.44 8.96 13.01H6.99Q6.99 13.44 7.28 13.73Q7.57 14.03 8 14.03ZM12 6.99Q13.23 6.99 14.11 6.11Q14.99 5.23 14.99 4Q14.99 2.77 14.11 1.89Q13.23 1.01 12 1.01Q10.77 1.01 9.89 1.89Q9.01 2.77 9.01 4Q9.01 5.23 9.89 6.11Q10.77 6.99 12 6.99Z" fill="#ffffff"/></svg><div id="frame"></div>
</div>
</body></html>
